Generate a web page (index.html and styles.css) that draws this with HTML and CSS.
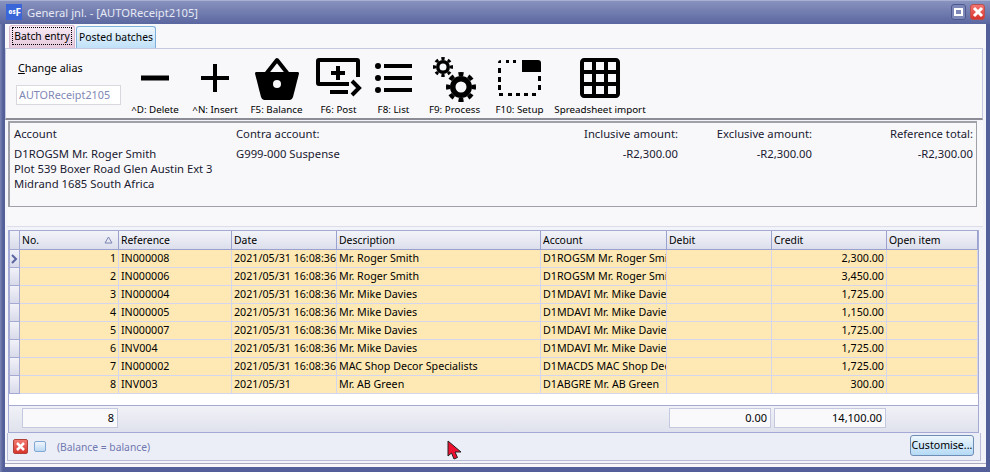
FILE: index.html
```html
<!DOCTYPE html>
<html lang="en">
<head>
  <meta charset="UTF-8">
  <title>General jnl.</title>
  <link rel="stylesheet" href="styles.css">
</head>
<body>
  <div class="window">
    <div class="titlebar">
      <span class="app-icon"><b>os</b>F</span>
      <span class="title">General jnl. - [AUTOReceipt2105]</span>
      <span class="win-btn max"><i></i></span>
      <span class="win-btn close">
        <svg width="12" height="12" viewBox="0 0 12 12"><path d="M2 2l8 8M10 2l-8 8" stroke="#fff" stroke-width="3"/></svg>
      </span>
    </div>
    <div class="content">
      <div class="tabs">
        <div class="tab active"><span>Batch entry</span></div>
        <div class="tab">Posted batches</div>
      </div>
      <div class="toolbar">
        <div class="alias">
          <div class="alias-label"><u>C</u>hange alias</div>
          <div class="alias-input">AUTOReceipt2105</div>
        </div>
        <div class="tool tool-delete">
          <div class="tool-icon"><svg width="28" height="6" viewBox="0 0 28 6"><rect y="0.500" width="28" height="5"/></svg></div>
          <span>^D: Delete</span>
        </div>
        <div class="tool tool-insert">
          <div class="tool-icon"><svg width="28" height="28" viewBox="0 0 28 28"><path d="M12 0h4v12h12v4H16v12h-4V16H0v-4h12z"/></svg></div>
          <span>^N: Insert</span>
        </div>
        <div class="tool tool-balance">
          <div class="tool-icon"><svg width="44" height="43" viewBox="0 0 44 43"><path d="M1 15h42q1 0 1 1.500L38 40q-1 3-3 3H9q-2 0-3-3L0 16.500Q0 15 1 15z"/><path d="M11 17L22 3l11 14" fill="none" stroke="#000" stroke-width="4" stroke-linejoin="round"/><circle cx="22" cy="27" r="4" fill="#f8f8fb"/></svg></div>
          <span>F5: Balance</span>
        </div>
        <div class="tool tool-post">
          <div class="tool-icon"><svg width="46" height="40" viewBox="0 0 46 40"><path d="M3 0h38c2 0 3 1 3 3v16h-4V4H4v20h29v4H3c-2 0-3-1-3-3V3c0-2 1-3 3-3z"/><path d="M20 8h4v5h5v4h-5v5h-4v-5h-5v-4h5zM14 32h18v4H14z"/><path d="M36 23l7 7-7 7" fill="none" stroke="#000" stroke-width="4"/></svg></div>
          <span>F6: Post</span>
        </div>
        <div class="tool tool-list">
          <div class="tool-icon"><svg width="38" height="30" viewBox="0 0 38 30"><circle cx="3" cy="3" r="3"/><circle cx="3" cy="15" r="3"/><circle cx="3" cy="27" r="3"/><path d="M9 1h28v4H9zM9 13h28v4H9zM9 25h28v4H9z"/></svg></div>
          <span>F8: List</span>
        </div>
        <div class="tool tool-process">
          <div class="tool-icon"><svg width="46" height="48" viewBox="0 0 46 48" fill="none" stroke="#000">
            <circle cx="11" cy="13" r="5.250" stroke-width="3.500"/>
            <circle cx="11" cy="13" r="8.500" stroke-width="3" pathLength="80" stroke-dasharray="5 5" stroke-dashoffset="2.500"/>
            <circle cx="29" cy="33" r="8.250" stroke-width="5.500"/>
            <circle cx="29" cy="33" r="13" stroke-width="4" pathLength="80" stroke-dasharray="5 5" stroke-dashoffset="2.500"/>
          </svg></div>
          <span>F9: Process</span>
        </div>
        <div class="tool tool-setup">
          <div class="tool-icon"><svg width="46" height="40" viewBox="0 0 46 40"><path d="M25 2h16c2 0 3 1 3 3v9H25z"/><path d="M1 5c0-2 1-3 3-3v3zM9 2h3v3H9zM16 2h3v3h-3zM1 10h3v5H1zM1 19h3v5H1zM1 27h3v5H1zM2 35h4v3H2zM11 35h4v3h-4zM19 35h4v3h-4zM27 35h4v3h-4zM35 35h4v3h-4zM41 18h3v5h-3zM41 27h3v5h-3z"/></svg></div>
          <span>F10: Setup</span>
        </div>
        <div class="tool tool-sheet">
          <div class="tool-icon"><svg width="40" height="40" viewBox="0 0 40 40"><path fill-rule="evenodd" d="M4 0h32c2 0 4 2 4 4v32c0 2-2 4-4 4H4c-2 0-4-2-4-4V4c0-2 2-4 4-4zM4 4v8h8V4zM16 4v8h8V4zM28 4v8h8V4zM4 16v8h8v-8zM16 16v8h8v-8zM28 16v8h8v-8zM4 28v8h8v-8zM16 28v8h8v-8zM28 28v8h8v-8z"/></svg></div>
          <span>Spreadsheet import</span>
        </div>
      </div>
      <div class="info-wrap">
        <div class="info">
          <div class="info-col col-account">
            <div class="info-head">Account</div>
            <div>D1ROGSM Mr. Roger Smith</div>
            <div>Plot 539 Boxer Road Glen Austin Ext 3</div>
            <div>Midrand 1685 South Africa</div>
          </div>
          <div class="info-col col-contra">
            <div class="info-head">Contra account:</div>
            <div>G999-000 Suspense</div>
          </div>
          <div class="info-col col-incl num">
            <div class="info-head">Inclusive amount:</div>
            <div>-R2,300.00</div>
          </div>
          <div class="info-col col-excl num">
            <div class="info-head">Exclusive amount:</div>
            <div>-R2,300.00</div>
          </div>
          <div class="info-col col-ref num">
            <div class="info-head">Reference total:</div>
            <div>-R2,300.00</div>
          </div>
        </div>
      </div>
      <div class="grid-wrap">
        <div class="row head">
          <div class="ind"></div>
          <div class="cell sort">No.<svg width="9" height="8" viewBox="0 0 9 8"><path d="M4.500 1L8 7H1z" fill="none" stroke="#7c84b4"/></svg></div>
          <div class="cell">Reference</div>
          <div class="cell">Date</div>
          <div class="cell">Description</div>
          <div class="cell">Account</div>
          <div class="cell">Debit</div>
          <div class="cell">Credit</div>
          <div class="cell">Open item</div>
        </div>
        <div class="row">
          <div class="ind current"><svg width="7" height="10" viewBox="0 0 7 10"><path d="M1 1l4 4-4 4" fill="none" stroke="#5a64a0" stroke-width="2"/></svg></div>
          <div class="cell r">1</div><div class="cell">IN000008</div><div class="cell">2021/05/31 16:08:36</div><div class="cell">Mr. Roger Smith</div><div class="cell">D1ROGSM Mr. Roger Smith</div><div class="cell"></div><div class="cell r">2,300.00</div><div class="cell"></div>
        </div>
        <div class="row">
          <div class="ind"></div>
          <div class="cell r">2</div><div class="cell">IN000006</div><div class="cell">2021/05/31 16:08:36</div><div class="cell">Mr. Roger Smith</div><div class="cell">D1ROGSM Mr. Roger Smith</div><div class="cell"></div><div class="cell r">3,450.00</div><div class="cell"></div>
        </div>
        <div class="row">
          <div class="ind"></div>
          <div class="cell r">3</div><div class="cell">IN000004</div><div class="cell">2021/05/31 16:08:36</div><div class="cell">Mr. Mike Davies</div><div class="cell">D1MDAVI Mr. Mike Davies</div><div class="cell"></div><div class="cell r">1,725.00</div><div class="cell"></div>
        </div>
        <div class="row">
          <div class="ind"></div>
          <div class="cell r">4</div><div class="cell">IN000005</div><div class="cell">2021/05/31 16:08:36</div><div class="cell">Mr. Mike Davies</div><div class="cell">D1MDAVI Mr. Mike Davies</div><div class="cell"></div><div class="cell r">1,150.00</div><div class="cell"></div>
        </div>
        <div class="row">
          <div class="ind"></div>
          <div class="cell r">5</div><div class="cell">IN000007</div><div class="cell">2021/05/31 16:08:36</div><div class="cell">Mr. Mike Davies</div><div class="cell">D1MDAVI Mr. Mike Davies</div><div class="cell"></div><div class="cell r">1,725.00</div><div class="cell"></div>
        </div>
        <div class="row">
          <div class="ind"></div>
          <div class="cell r">6</div><div class="cell">INV004</div><div class="cell">2021/05/31 16:08:36</div><div class="cell">Mr. Mike Davies</div><div class="cell">D1MDAVI Mr. Mike Davies</div><div class="cell"></div><div class="cell r">1,725.00</div><div class="cell"></div>
        </div>
        <div class="row">
          <div class="ind"></div>
          <div class="cell r">7</div><div class="cell">IN000002</div><div class="cell">2021/05/31 16:08:36</div><div class="cell">MAC Shop Decor Specialists</div><div class="cell">D1MACDS MAC Shop Decor</div><div class="cell"></div><div class="cell r">1,725.00</div><div class="cell"></div>
        </div>
        <div class="row">
          <div class="ind"></div>
          <div class="cell r">8</div><div class="cell">INV003</div><div class="cell">2021/05/31</div><div class="cell">Mr. AB Green</div><div class="cell">D1ABGRE Mr. AB Green</div><div class="cell"></div><div class="cell r">300.00</div><div class="cell"></div>
        </div>
        <div class="grid-blank"></div>
        <div class="row totals">
          <div class="ind"></div>
          <div class="total-cell"><span class="total-box">8</span></div>
          <div></div><div></div><div></div><div></div>
          <div class="total-cell"><span class="total-box">0.00</span></div>
          <div class="total-cell"><span class="total-box">14,100.00</span></div>
          <div></div>
        </div>
      </div>
      <div class="status">
        <span class="status-x"><svg width="11" height="11" viewBox="0 0 11 11"><path d="M2 2l7 7M9 2l-7 7" stroke="#fff" stroke-width="2.500"/></svg></span>
        <span class="status-box"></span>
        <span class="status-text">(Balance = balance)</span>
        <button class="customise">Customise...</button>
      </div>
    </div>
  </div>
  <svg class="cursor" width="15" height="20" viewBox="0 0 15 20"><path d="M1 1v15l3.500-3 2.500 6 3.500-1.500L8 12h6z" fill="#ee1030" stroke="#222" stroke-width="1"/></svg>
</body>
</html>
```

FILE: styles.css
```css
html, body {
  margin: 0;
  padding: 0;
  width: 990px;
  height: 472px;
  overflow: hidden;
}
body {
  font-family: "Noto Sans", "Liberation Sans", sans-serif;
  font-size: 10.7px;
  color: #000;
  position: relative;
}
svg {
  display: block;
  flex-shrink: 0;
}

/* window frame */
.window {
  height: 472px;
  box-sizing: border-box;
  display: flex;
  flex-direction: column;
  background: linear-gradient(90deg, #7a84b4, #535f99 3px);
  padding: 0 4px 5px 5px;
}
.titlebar {
  height: 24px;
  flex-shrink: 0;
  margin: 0 -4px 0 -5px;
  padding: 0 5px 0 6px;
  display: flex;
  align-items: center;
  background: linear-gradient(#8a94c0, #5a669f);
  box-shadow: inset 0 1px 0 #a8b0d4;
  color: #e6e8f4;
  font-size: 11.2px;
}
.app-icon {
  width: 16px;
  height: 16px;
  background: #3b66d8;
  color: #fff;
  font-weight: bold;
  font-size: 10px;
  line-height: 16px;
  margin-right: 5px;
  display: flex;
  justify-content: flex-end;
  padding-right: 1px;
  box-sizing: border-box;
}
.app-icon b {
  font-size: 6px;
}
.title {
  flex: 1;
}
.win-btn {
  width: 15px;
  height: 16px;
  box-sizing: border-box;
  border-radius: 3px;
  margin-left: 4px;
  display: flex;
  align-items: center;
  justify-content: center;
  border: 1px solid #4d5891;
}
.win-btn.max {
  background: #7e88b8;
}
.win-btn.max i {
  display: block;
  width: 5px;
  height: 4px;
  border: 2px solid #fff;
}
.win-btn.close {
  background: linear-gradient(#f57570, #d8332c);
  border-color: #b9504f;
}
.content {
  flex: 1;
  background: #f3f4fa;
  display: flex;
  flex-direction: column;
  padding-bottom: 6px;
  box-shadow: inset 0 -3px 0 #f8f8fb, inset 0 -4px 0 #a8aac0;
  min-height: 0;
}

/* tabs */
.tabs {
  display: flex;
  align-items: flex-end;
  gap: 1px;
  height: 24px;
  flex-shrink: 0;
  padding-left: 4px;
  background: #f8f8fb;
  font-size: 10.3px;
}
.tab {
  width: 80px;
  height: 22px;
  box-sizing: border-box;
  text-align: center;
  line-height: 21px;
  border: 1px solid #7fb0dc;
  border-bottom: none;
  border-radius: 3px 3px 0 0;
  background: linear-gradient(#eef6fd, #bfe0f8);
}
.tab.active {
  width: 66px;
  height: 23px;
  border-color: #d9b6d0;
  background: linear-gradient(#f6eaf3, #e6c8dc);
}
.tab.active span {
  outline: 1px dotted #000;
  padding: 1px;
}

/* toolbar */
.toolbar {
  height: 72px;
  flex-shrink: 0;
  box-sizing: border-box;
  margin-right: 3px;
  display: flex;
  background: #f8f8fb;
  border: 1px solid #c5c9e0;
  border-bottom: 2px solid #8c8c96;
  font-size: 9.8px;
}
.alias {
  width: 114px;
  padding: 12px 0 0 10px;
  font-size: 10.8px;
}
.alias-label {
  height: 24px;
  line-height: 14px;
  padding-left: 2px;
}
.alias-input {
  width: 105px;
  height: 20px;
  box-sizing: border-box;
  line-height: 18px;
  border: 1px solid #d8d8de;
  background: #fff;
  color: #8088b4;
  padding-left: 2px;
}
.tool {
  display: flex;
  flex-direction: column;
  align-items: center;
  padding-top: 8px;
}
.tool-icon {
  height: 42px;
  display: flex;
  align-items: center;
  justify-content: center;
  margin-bottom: 4px;
}
.tool span {
  white-space: nowrap;
  line-height: 14px;
}
.tool-delete { width: 50px; }
.tool-insert { width: 46px; margin-left: 12px; }
.tool-balance { width: 57px; margin-left: 10px; }
.tool-post { width: 39px; margin-left: 14px; }
.tool-list { width: 33px; margin-left: 19px; }
.tool-process { width: 55px; margin-left: 17px; }
.tool-setup { width: 53px; margin-left: 11px; }
.tool-sheet { width: 90px; margin-left: 9px; }

/* account summary */
.info-wrap {
  height: 106px;
  flex-shrink: 0;
  margin: 1px 3px 0 2px;
  padding-left: 1px;
  box-sizing: border-box;
  background: #f8f8fb;
  border-bottom: 1px solid #dcdde8;
}
.info {
  height: 86px;
  margin-right: 6px;
  background: #f8f8fb;
  border: 1px solid #a0a0a8;
  border-top-width: 2px;
  border-left-width: 2px;
  display: flex;
  line-height: 15px;
  font-size: 11.25px;
  padding-top: 3px;
  box-sizing: border-box;
  color: #1a1a30;
}
.info-head {
  margin-bottom: 5px;
}
.col-account { width: 222px; padding-left: 4px; }
.col-contra { width: 240px; }
.col-incl { width: 202px; }
.col-excl { width: 134px; }
.col-ref { width: 161px; }
.num {
  text-align: right;
}

/* batch grid */
.grid-wrap {
  margin: 3px 7px 0 3px;
  flex-shrink: 0;
  background: #fff;
  border: 1px solid #a4aad4;
  border-bottom: none;
}
.row {
  display: grid;
  grid-template-columns: 11px 99px 113px 105px 204px 126px 105px 115px 91px;
  height: 18px;
  background: #fee9b4;
}
.cell {
  border-right: 1px solid #d4d6f0;
  border-bottom: 1px solid #d4d6f0;
  padding: 0 2px;
  line-height: 17px;
  white-space: nowrap;
  overflow: hidden;
  box-sizing: border-box;
}
.cell.r {
  text-align: right;
}
.ind {
  background: linear-gradient(#f1f2f8, #d8daea);
  border: 1px solid #a4aad4;
  border-top: none;
  box-sizing: border-box;
}
.ind.current {
  display: flex;
  align-items: center;
  justify-content: center;
}
.row.head {
  height: 19px;
  background: #ebedf5;
}
.head .cell {
  background: linear-gradient(#f3f4f9, #dcdeec);
  border-right: 1px solid #9aa1cf;
  border-bottom: 1px solid #9aa1cf;
  line-height: 18px;
  font-size: 10.4px;
}
.head .sort {
  display: flex;
  justify-content: space-between;
  align-items: center;
  padding-right: 5px;
}
.grid-blank {
  height: 11px;
  background: #fff;
  border-bottom: 1px solid #a4aad4;
}
.row.totals {
  height: 27px;
  box-sizing: border-box;
  background: linear-gradient(#f1f2f7, #dfe1ec);
  border-bottom: 1px solid #a4aad4;
}
.totals .ind {
  background: none;
  border: none;
}
.total-cell {
  padding: 2px 1px 0 2px;
  font-size: 11px;
}
.total-box {
  display: block;
  height: 20px;
  box-sizing: border-box;
  line-height: 18px;
  background: #f9f9fb;
  border: 1px solid #c5c9e0;
  text-align: right;
  padding-right: 3px;
}

/* status strip */
.status {
  flex: 1;
  display: flex;
  align-items: center;
  margin: 0 5px 0 2px;
  padding-left: 5px;
  padding-right: 6px;
  background: #eceef7;
  border-bottom: 1px solid #b8bcd6;
  border-left: 1px solid #b8bcd6;
  border-right: 1px solid #b8bcd6;
}
.status-x {
  width: 15px;
  height: 15px;
  box-sizing: border-box;
  border-radius: 2px;
  background: linear-gradient(#f27a70, #d8352c);
  border: 1px solid #b04038;
  display: flex;
  align-items: center;
  justify-content: center;
}
.status-box {
  width: 12px;
  height: 11px;
  box-sizing: border-box;
  margin-left: 6px;
  border: 1px solid #7fa8d4;
  border-radius: 2px;
  background: linear-gradient(#f0f6fc, #bcd8f2);
}
.status-text {
  margin-left: 11px;
  flex: 1;
  color: #7078b0;
  font-size: 10.3px;
}
.customise {
  width: 64px;
  height: 21px;
  padding: 0;
  font: inherit;
  font-size: 10.6px;
  color: #000;
  border: 1px solid #6d8db5;
  border-radius: 3px;
  background: linear-gradient(#eef6fc, #b4daf6);
  margin-bottom: 3px;
}

.cursor {
  position: absolute;
  left: 447px;
  top: 440px;
}
```
